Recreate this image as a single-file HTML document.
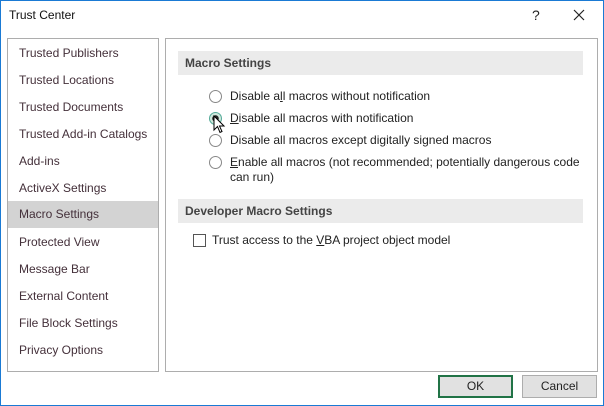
<!DOCTYPE html>
<html><head><style>
*{margin:0;padding:0;box-sizing:border-box}
body{width:604px;height:406px;overflow:hidden;background:#fff;font-family:"Liberation Sans",sans-serif;font-size:12px;color:#222;position:relative}
.win{position:absolute;left:0;top:0;width:604px;height:406px;border:1px solid #1a7ad4;background:#fff}
.a{position:absolute;white-space:nowrap}
.nav{position:absolute;left:7px;top:38px;width:152px;height:334px;border:1px solid #adadad}
.nav div{position:absolute;left:0;width:150px;height:27px;line-height:27px;padding-left:11px;color:#44303a}
.nav .sel{background:#d3d3d3}
.main{position:absolute;left:165px;top:38px;width:433px;height:334px;border:1px solid #adadad}
.hd{position:absolute;left:178px;width:405px;height:24px;line-height:24px;background:#ebebeb;padding-left:7px;font-weight:bold;color:#444}
.r{position:absolute;width:13px;height:13px;border:1px solid #888;border-radius:50%;background:#fff}
.btn{position:absolute;top:375px;width:75px;height:23px;background:#e1e1e1;border:1px solid #adadad;text-align:center;line-height:21px;color:#222}
</style></head><body><div class="win"></div>
<div class="a" style="left:9px;top:8px;font-size:12px;color:#111">Trust Center</div>
<div class="a" style="left:532px;top:7px;font-size:14px">?</div>
<svg class="a" style="left:573px;top:9px" width="12" height="12" viewBox="0 0 12 12"><path d="M1 1L11 11M11 1L1 11" stroke="#222" stroke-width="1.2"/></svg>
<div class="nav">
<div style="top:1px">Trusted Publishers</div>
<div style="top:28px">Trusted Locations</div>
<div style="top:55px">Trusted Documents</div>
<div style="top:82px">Trusted Add-in Catalogs</div>
<div style="top:109px">Add-ins</div>
<div style="top:136px">ActiveX Settings</div>
<div class="sel" style="top:162px">Macro Settings</div>
<div style="top:190px">Protected View</div>
<div style="top:217px">Message Bar</div>
<div style="top:244px">External Content</div>
<div style="top:271px">File Block Settings</div>
<div style="top:298px">Privacy Options</div>
</div>
<div class="main"></div>
<div class="hd" style="top:51px">Macro Settings</div>
<div class="r" style="left:209px;top:90px"></div>
<div class="a" style="left:230px;top:89px">Disable a<u>l</u>l macros without notification</div>
<div class="r" style="left:209px;top:112px;border-color:#5a9;background:radial-gradient(circle,#222 0 3px,#cfe8dc 3.5px)"></div>
<div class="a" style="left:230px;top:111px"><u>D</u>isable all macros with notification</div>
<div class="r" style="left:209px;top:134px"></div>
<div class="a" style="left:230px;top:133px">Disable all macros except di<u>g</u>itally signed macros</div>
<div class="r" style="left:209px;top:156px"></div>
<div class="a" style="left:230px;top:155px"><u>E</u>nable all macros (not recommended; potentially dangerous code</div>
<div class="a" style="left:230px;top:170px">can run)</div>
<svg class="a" style="left:213px;top:115px" width="16" height="20" viewBox="0 0 16 20"><path d="M1 1 L1 15 L4.5 11.5 L7 17.5 L9 16.5 L6.5 11 L11 11 Z" fill="#fff" stroke="#000" stroke-width="1"/></svg>
<div class="hd" style="top:199px">Developer Macro Settings</div>
<div class="a" style="left:193px;top:234px;width:13px;height:13px;border:1px solid #555;background:#fff"></div>
<div class="a" style="left:212px;top:233px">Trust access to the <u>V</u>BA project object model</div>
<div class="btn" style="left:438px;border:2px solid #217346;line-height:19px">OK</div>
<div class="btn" style="left:522px">Cancel</div>
</body></html>
